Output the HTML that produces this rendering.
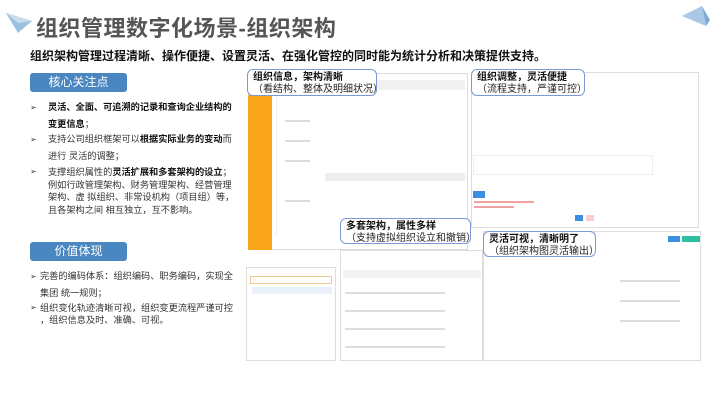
<!DOCTYPE html>
<html><head><meta charset="utf-8"><style>
*{margin:0;padding:0;box-sizing:border-box}
body{width:720px;height:405px;background:#fff;position:relative;overflow:hidden;font-family:"Liberation Sans","Noto Sans CJK SC",sans-serif;color:#333}
.a{position:absolute}
.title{left:36px;top:11px;font-size:22px;font-weight:bold;color:#555;letter-spacing:0.5px}
.sub{left:30px;top:47px;font-size:12px;font-weight:bold;color:#111}
.btn{background:#4a86c0;color:#fff;font-size:12px;text-align:center;border-radius:3px;line-height:19px;width:97px;height:19px;left:30px}
.li{font-size:9.2px;color:#333;line-height:15px}
.li b{color:#111}
.arr{position:absolute;left:-18px;top:0;font-size:8px}
.shot{border:1px solid #ddd;background:#fff}
.call{border:1.5px solid #7a9ad6;border-radius:6px;background:#fff;font-size:10px;line-height:12px;padding:2px 5px;color:#222;white-space:nowrap;overflow:hidden}
.call b{font-weight:bold;color:#111}
.ln{position:absolute;height:2px;background:#ddd}
</style></head><body>
<svg class="a" style="left:4px;top:11px" width="30" height="24"><polygon points="2,2 28,10 14,22" fill="#9cc0e0"/><polygon points="2,2 28,10 14,12" fill="#c6dcef"/></svg>
<div class="a title">组织管理数字化场景-组织架构</div>
<svg class="a" style="left:680px;top:2px" width="34" height="26"><polygon points="2,14 22,4 26,24" fill="#a9c8e6"/><polygon points="22,4 30,18 26,24" fill="#7eaad6"/></svg>
<div class="a sub">组织架构管理过程清晰、操作便捷、设置灵活、在强化管控的同时能为统计分析和决策提供支持。</div>

<div class="a btn" style="top:73px">核心关注点</div>
<div class="a li" style="left:48px;top:99px;width:192px;line-height:17px"><span class="arr">➢</span><b>灵活、全面、可追溯的记录和查询企业结构的变更信息</b>；</div>
<div class="a li" style="left:48px;top:131px;width:192px;line-height:17px"><span class="arr">➢</span>支持公司组织框架可以<b>根据实际业务的变动</b>而进行 灵活的调整；</div>
<div class="a li" style="left:48px;top:166px;width:190px;line-height:12.5px"><span class="arr">➢</span>支撑组织属性的<b>灵活扩展和多套架构的设立</b>；例如行政管理架构、财务管理架构、经营管理架构、虚 拟组织、非常设机构（项目组）等，且各架构之间 相互独立，互不影响。</div>

<div class="a btn" style="top:242px">价值体现</div>
<div class="a li" style="left:40px;top:268px;width:196px;line-height:17px"><span class="arr" style="left:-10px">➢</span>完善的编码体系：组织编码、职务编码，实现全集团 统一规则；</div>
<div class="a li" style="left:40px;top:302px;width:205px;line-height:12px"><span class="arr" style="left:-10px">➢</span>组织变化轨迹清晰可视，组织变更流程严谨可控<br>，组织信息及时、准确、可视。</div>

<div class="a shot" style="left:248px;top:73px;width:220px;height:177px"></div>
<div class="a" style="left:248px;top:95px;width:24px;height:155px;background:#f9a61a"></div>
<div class="a" style="left:276px;top:95px;width:1px;height:140px;background:#eee"></div>
<div class="a" style="left:325px;top:80px;width:140px;height:10px;background:#f1f1f1"></div>
<div class="a" style="left:325px;top:173px;width:140px;height:8px;background:#eee"></div>
<div class="a shot" style="left:471px;top:72px;width:228px;height:156px"></div>
<div class="a" style="left:473px;top:155px;width:180px;height:20px;border:1px solid #eee"></div>
<div class="a" style="left:473px;top:191px;width:12px;height:7px;background:#3c8ee0"></div>
<div class="a" style="left:474px;top:201px;width:60px;height:2px;background:#f2a0a0"></div>
<div class="a" style="left:474px;top:206px;width:40px;height:2px;background:#f2a0a0"></div>
<div class="a" style="left:575px;top:215px;width:8px;height:6px;background:#3c8ee0"></div>
<div class="a" style="left:586px;top:215px;width:8px;height:6px;background:#f4d0d0"></div>
<div class="a shot" style="left:246px;top:267px;width:90px;height:94px"></div>
<div class="a" style="left:250px;top:276px;width:82px;height:8px;border:1px solid #f3c890"></div>
<div class="a" style="left:252px;top:287px;width:80px;height:7px;background:#eaf1fb"></div>
<div class="a shot" style="left:340px;top:250px;width:143px;height:111px"></div>
<div class="a" style="left:343px;top:270px;width:138px;height:8px;background:#f2f2f2"></div>
<div class="a shot" style="left:483px;top:231px;width:218px;height:130px"></div>
<div class="a" style="left:668px;top:236px;width:12px;height:6px;background:#3c8ee0"></div>
<div class="a" style="left:682px;top:236px;width:18px;height:6px;background:#2cc0a0"></div>

<div class="ln" style="left:285px;top:120px;width:25px"></div>
<div class="ln" style="left:285px;top:140px;width:25px"></div>
<div class="ln" style="left:285px;top:160px;width:25px"></div>
<div class="ln" style="left:285px;top:200px;width:25px"></div>
<div class="ln" style="left:345px;top:292px;width:100px"></div>
<div class="ln" style="left:345px;top:310px;width:100px"></div>
<div class="ln" style="left:345px;top:328px;width:100px"></div>
<div class="ln" style="left:345px;top:346px;width:100px"></div>
<div class="ln" style="left:620px;top:280px;width:60px"></div>
<div class="ln" style="left:620px;top:300px;width:60px"></div>
<div class="ln" style="left:620px;top:320px;width:60px"></div>

<div class="a call" style="left:247px;top:69px;width:130px;height:27px"><b>组织信息，架构清晰</b><br>（看结构、整体及明细状况）</div>
<div class="a call" style="left:471px;top:69px;width:114px;height:27px"><b>组织调整，灵活便捷</b><br>（流程支持，严谨可控）</div>
<div class="a call" style="left:340px;top:218px;width:131px;height:26px"><b>多套架构，属性多样</b><br>（支持虚拟组织设立和撤销）</div>
<div class="a call" style="left:483px;top:231px;width:113px;height:26px"><b>灵活可视，清晰明了</b><br>（组织架构图灵活输出）</div>
</body></html>
